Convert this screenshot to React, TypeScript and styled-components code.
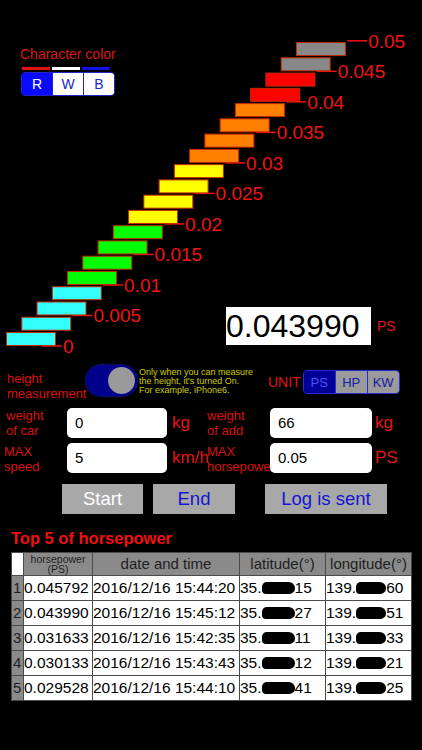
import { Fragment } from "react";
import { createGlobalStyle, styled } from "styled-components";

const GlobalStyle = createGlobalStyle`
  html, body {
    margin: 0;
    padding: 0;
    background: #000;
  }
  body {
    font-family: "Liberation Sans", Arial, sans-serif;
    width: 422px;
    height: 750px;
    overflow: hidden;
  }
`;

const BAR_COLORS = [
  "#33ffff", "#33ffff", "#33ffff", "#33ffff",
  "#00ff00", "#00ff00", "#00ff00", "#00ff00",
  "#ffff00", "#ffff00", "#ffff00", "#ffff00",
  "#ff8000", "#ff8000", "#ff8000", "#ff8000",
  "#ff0000", "#ff0000",
  "#888888", "#888888",
];
const STEP = 15.26;
const LABELS = ["0", "0.005", "0.01", "0.015", "0.02", "0.025", "0.03", "0.035", "0.04", "0.045", "0.05"];

const ROWS = [
  { hp: "0.045792", time: "2016/12/16 15:44:20", lat: "15", lon: "60" },
  { hp: "0.043990", time: "2016/12/16 15:45:12", lat: "27", lon: "51" },
  { hp: "0.031633", time: "2016/12/16 15:42:35", lat: "11", lon: "33" },
  { hp: "0.030133", time: "2016/12/16 15:43:43", lat: "12", lon: "21" },
  { hp: "0.029528", time: "2016/12/16 15:44:10", lat: "41", lon: "25" },
];

const Page = styled.div`
  width: 422px;
  height: 750px;
  background: #000;
`;

const TopSection = styled.section`
  position: relative;
  height: 360px;
  padding-top: 46px;
  box-sizing: border-box;
  display: flex;
  flex-direction: column;
`;

const Chart = styled.svg`
  position: absolute;
  left: 0;
  top: 0;
  z-index: 0;
`;

const ColorPanel = styled.div`
  position: relative;
  z-index: 1;
  margin-left: 21px;
  display: flex;
  flex-direction: column;
`;

const PanelLabel = styled.div`
  color: #d81818;
  font-size: 14px;
  line-height: 16px;
  margin-left: -1px;
`;

const LineRow = styled.div`
  display: flex;
  margin-top: 5px;
`;

const ColorLine = styled.span<{ $color: string }>`
  width: 28px;
  height: 3px;
  margin: 0 1px;
  background: ${(p) => p.$color};
`;

const Segmented = styled.div<{ $border: string }>`
  display: flex;
  border: 1px solid ${(p) => p.$border};
  border-radius: 4px;
  overflow: hidden;
  align-self: flex-start;
`;

const ColorSeg = styled.div<{ $active?: boolean }>`
  width: 30px;
  height: 22px;
  display: flex;
  align-items: center;
  justify-content: center;
  font-size: 14px;
  background: ${(p) => (p.$active ? "#0a0aff" : "#fff")};
  color: ${(p) => (p.$active ? "#fff" : "#2424c8")};
  & + & {
    border-left: 1px solid #2424c8;
  }
`;

const ReadingRow = styled.div`
  position: relative;
  z-index: 1;
  margin-top: auto;
  margin-bottom: 15px;
  margin-left: 226px;
  display: flex;
  align-items: center;
`;

const ReadingBox = styled.div`
  width: 145px;
  height: 38px;
  background: #fff;
  color: #000;
  font-size: 32px;
  line-height: 38px;
  overflow: hidden;
`;

const RedUnit = styled.span<{ $size?: number }>`
  color: #e01515;
  font-size: ${(p) => p.$size ?? 14}px;
  white-space: nowrap;
`;

const MeasureRow = styled.div`
  display: flex;
  align-items: flex-start;
  margin-top: 5px;
  height: 31px;
`;

const TwoLineLabel = styled.div<{ $width: number; $pad?: number }>`
  width: ${(p) => p.$width}px;
  padding-left: ${(p) => p.$pad ?? 0}px;
  box-sizing: border-box;
  color: #d81010;
  font-size: 13px;
  line-height: 15px;
  white-space: nowrap;
`;

const Toggle = styled.div`
  width: 51px;
  height: 31px;
  border-radius: 16px;
  background: #00008c;
  box-shadow: 0 0 1px 1px #10106a;
  display: flex;
  align-items: center;
  justify-content: flex-end;
  padding: 0 2px;
  box-sizing: border-box;
`;

const Knob = styled.span`
  width: 27px;
  height: 27px;
  border-radius: 50%;
  background: #9a9a9a;
`;

const Note = styled.div`
  width: 121px;
  margin-left: 2px;
  margin-top: 2.5px;
  color: #cccc00;
  font-size: 9px;
  line-height: 9px;
  white-space: nowrap;
`;

const UnitLabel = styled.div`
  margin-left: 8px;
  margin-top: 9px;
  color: #e01515;
  font-size: 14px;
  line-height: 16px;
`;

const UnitSeg = styled.div<{ $active?: boolean }>`
  width: 31px;
  height: 22px;
  display: flex;
  align-items: center;
  justify-content: center;
  font-size: 13px;
  background: ${(p) => (p.$active ? "#000096" : "#9a9a9a")};
  color: ${(p) => (p.$active ? "#5050ff" : "#1818a8")};
  & + & {
    border-left: 1px solid #2b2bd6;
  }
`;

const FormGrid = styled.div`
  display: grid;
  grid-template-columns: 63px 100px 40px 63px 102px auto;
  grid-auto-rows: 30px;
  row-gap: 5px;
  padding-left: 4px;
  margin-top: 12px;
  align-items: center;
`;

const Field = styled.div`
  height: 30px;
  background: #fff;
  border-radius: 5px;
  color: #000;
  font-size: 15px;
  line-height: 30px;
  padding-left: 8px;
  box-sizing: border-box;
`;

const FieldUnit = styled.div<{ $pad: number }>`
  padding-left: ${(p) => p.$pad}px;
  color: #e01515;
  font-size: 17px;
  white-space: nowrap;
`;

const ButtonRow = styled.div`
  display: flex;
  margin-top: 11px;
  padding-left: 62px;
  height: 30px;
`;

const ActionButton = styled.div<{ $width: number; $gap: number; $light?: boolean }>`
  width: ${(p) => p.$width}px;
  margin-right: ${(p) => p.$gap}px;
  background: #a8a8a8;
  color: ${(p) => (p.$light ? "#fff" : "#1414d2")};
  font-size: 18.5px;
  display: flex;
  align-items: center;
  justify-content: center;
`;

const Title = styled.h2`
  margin: 14px 0 0 11px;
  color: #f01010;
  font-size: 16.5px;
  font-weight: bold;
  line-height: 20px;
`;

const Table = styled.div`
  margin: 4px 0 0 11px;
  display: grid;
  grid-template-columns: 11px 68px 146px 85px 85px;
  grid-template-rows: 22px repeat(5, 24px);
  gap: 1px;
  padding: 1px;
  background: #4a4a4a;
  width: max-content;
`;

const HeadCell = styled.div<{ $blank?: boolean; $small?: boolean }>`
  background: ${(p) => (p.$blank ? "#fff" : "#8a8a8a")};
  color: #1e1e1e;
  font-size: ${(p) => (p.$small ? 10.5 : 15)}px;
  line-height: ${(p) => (p.$small ? "10.5px" : "22px")};
  text-align: center;
  display: flex;
  flex-direction: column;
  justify-content: center;
`;

const IndexCell = styled.div`
  background: #8a8a8a;
  color: #1e1e1e;
  font-size: 15px;
  line-height: 24px;
  padding-left: 1px;
`;

const Cell = styled.div`
  background: #fff;
  color: #000;
  font-size: 15.5px;
  line-height: 24px;
  white-space: nowrap;
  overflow: hidden;
  display: flex;
  align-items: center;
`;

const Blot = styled.span<{ $width: number }>`
  display: inline-block;
  width: ${(p) => p.$width}px;
  height: 12px;
  border-radius: 6px 8px 7px 5px;
  background: #000;
`;

function StepChart() {
  return (
    <Chart width={422} height={360} viewBox="0 0 422 360">
      {LABELS.map((label, k) => {
        const y = 346 - 2 * STEP * k;
        const xr = 56 + 2 * STEP * k;
        return (
          <g key={label}>
            <line x1={xr - 14} y1={y} x2={xr + 6} y2={y} stroke="#ee1010" strokeWidth={1.5} />
            <text
              x={xr + 7}
              y={y + 7}
              fill="#f01414"
              fontSize={19}
              fontFamily='"Liberation Sans", Arial, sans-serif'
            >
              {label}
            </text>
          </g>
        );
      })}
      {BAR_COLORS.map((color, i) => (
        <rect
          key={i}
          x={6.5 + i * STEP}
          y={332.5 - i * STEP}
          width={49}
          height={13}
          fill={color}
          stroke="#c42a00"
          strokeWidth={1}
        />
      ))}
    </Chart>
  );
}

export default function App() {
  return (
    <Page>
      <GlobalStyle />
      <TopSection>
        <StepChart />
        <ColorPanel>
          <PanelLabel>Character color</PanelLabel>
          <LineRow>
            <ColorLine $color="#e01010" />
            <ColorLine $color="#ffffff" />
            <ColorLine $color="#1010e0" />
          </LineRow>
          <Segmented $border="#2424c8" style={{ marginTop: 2 }}>
            <ColorSeg $active>R</ColorSeg>
            <ColorSeg>W</ColorSeg>
            <ColorSeg>B</ColorSeg>
          </Segmented>
        </ColorPanel>
        <ReadingRow>
          <ReadingBox>0.043990</ReadingBox>
          <RedUnit style={{ marginLeft: 6 }}>PS</RedUnit>
        </ReadingRow>
      </TopSection>

      <MeasureRow>
        <TwoLineLabel $width={86} $pad={7} style={{ marginTop: 6 }}>
          height
          <br />
          measurement
        </TwoLineLabel>
        <Toggle>
          <Knob />
        </Toggle>
        <Note>
          Only when you can measure
          <br />
          the height, it's turned On.
          <br />
          For example, iPhone6.
        </Note>
        <UnitLabel>UNIT</UnitLabel>
        <Segmented $border="#2b2bd6" style={{ marginLeft: 2, marginTop: 5 }}>
          <UnitSeg $active>PS</UnitSeg>
          <UnitSeg>HP</UnitSeg>
          <UnitSeg>KW</UnitSeg>
        </Segmented>
      </MeasureRow>

      <FormGrid>
        <TwoLineLabel $width={63} $pad={2}>
          weight
          <br />
          of car
        </TwoLineLabel>
        <Field>0</Field>
        <FieldUnit $pad={5}>kg</FieldUnit>
        <TwoLineLabel $width={63}>
          weight
          <br />
          of add
        </TwoLineLabel>
        <Field>66</Field>
        <FieldUnit $pad={3}>kg</FieldUnit>

        <TwoLineLabel $width={63} style={{ paddingTop: 2 }}>
          MAX
          <br />
          speed
        </TwoLineLabel>
        <Field>5</Field>
        <FieldUnit $pad={5}>km/h</FieldUnit>
        <TwoLineLabel $width={63} style={{ paddingTop: 2 }}>
          MAX
          <br />
          horsepower
        </TwoLineLabel>
        <Field>0.05</Field>
        <FieldUnit $pad={3}>PS</FieldUnit>
      </FormGrid>

      <ButtonRow>
        <ActionButton $width={81} $gap={10} $light>
          Start
        </ActionButton>
        <ActionButton $width={82} $gap={30}>
          End
        </ActionButton>
        <ActionButton $width={122} $gap={0}>
          Log is sent
        </ActionButton>
      </ButtonRow>

      <Title>Top 5 of horsepower</Title>
      <Table>
        <HeadCell $blank />
        <HeadCell $small>
          <span>horsepower</span>
          <span>(PS)</span>
        </HeadCell>
        <HeadCell>date and time</HeadCell>
        <HeadCell>latitude(°)</HeadCell>
        <HeadCell>longitude(°)</HeadCell>
        {ROWS.map((row, i) => (
          <Fragment key={row.time}>
            <IndexCell>{i + 1}</IndexCell>
            <Cell>{row.hp}</Cell>
            <Cell>{row.time}</Cell>
            <Cell>
              35.
              <Blot $width={33} />
              {row.lat}
            </Cell>
            <Cell>
              139.
              <Blot $width={30} />
              {row.lon}
            </Cell>
          </Fragment>
        ))}
      </Table>
    </Page>
  );
}
